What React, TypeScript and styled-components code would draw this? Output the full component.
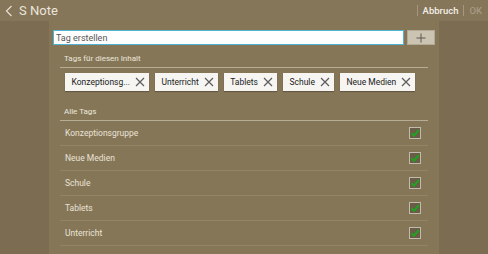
import React from 'react';
import styled, { createGlobalStyle } from 'styled-components';

const GlobalStyle = createGlobalStyle`
  html, body {
    margin: 0;
    padding: 0;
    background: #7c6c52;
  }
  body {
    font-family: 'Roboto', 'Noto Sans', sans-serif;
  }
`;

const selectedTags = ['Konzeptionsgruppe', 'Unterricht', 'Tablets', 'Schule', 'Neue Medien'];
const allTags = ['Konzeptionsgruppe', 'Neue Medien', 'Schule', 'Tablets', 'Unterricht'];

const shorten = (text: string, max = 12) =>
  text.length > max ? text.slice(0, max) + '...' : text;

const CrossIcon = () => (
  <svg width="10" height="10" viewBox="0 0 10 10">
    <path d="M1 1 L9 9 M9 1 L1 9" stroke="#5c5c5c" strokeWidth="1.2" fill="none" />
  </svg>
);

const CheckIcon = () => (
  <svg width="10" height="10" viewBox="0 0 10 10">
    <path d="M1.5 5.2 L4 7.8 L8.8 2" stroke="#1fa31f" strokeWidth="2" fill="none" />
  </svg>
);

export default function App() {
  return (
    <>
      <GlobalStyle />
      <Screen>
        <TopBar>
          <Title>
            <svg width="8" height="12" viewBox="0 0 8 12">
              <path d="M6.5 1 L1.5 6 L6.5 11" stroke="#e6e1d6" strokeWidth="1.2" fill="none" />
            </svg>
            <span>S Note</span>
          </Title>
          <Actions>
            <Divider />
            <ActionButton>Abbruch</ActionButton>
            <Divider />
            <ActionButton disabled>OK</ActionButton>
          </Actions>
        </TopBar>
        <Body>
          <Panel>
            <InputRow>
              <TagInput placeholder="Tag erstellen" autoFocus />
              <AddButton>
                <svg width="10" height="10" viewBox="0 0 10 10">
                  <path d="M5 0.5 V9.5 M0.5 5 H9.5" stroke="#5a5650" strokeWidth="1" fill="none" />
                </svg>
              </AddButton>
            </InputRow>

            <SectionHeader>Tags für diesen Inhalt</SectionHeader>
            <ChipList>
              {selectedTags.map(tag => (
                <Chip key={tag}>
                  <span>{shorten(tag)}</span>
                  <CrossIcon />
                </Chip>
              ))}
            </ChipList>

            <SectionHeader top={16}>Alle Tags</SectionHeader>
            <TagList>
              {allTags.map(tag => (
                <TagRow key={tag}>
                  <span>{tag}</span>
                  <CheckBox>
                    <CheckIcon />
                  </CheckBox>
                </TagRow>
              ))}
            </TagList>
          </Panel>
        </Body>
      </Screen>
    </>
  );
}

const Screen = styled.div`
  width: 488px;
  height: 254px;
  display: flex;
  flex-direction: column;
  overflow: hidden;
  background: #7c6c52;
`;

const TopBar = styled.div`
  height: 21px;
  flex-shrink: 0;
  display: flex;
  align-items: center;
  justify-content: space-between;
  background: #857559;
  padding: 0 6px 0 5px;
`;

const Title = styled.div`
  display: flex;
  align-items: center;
  gap: 6px;
  color: #ebe6dc;
  font-size: 13px;
`;

const Actions = styled.div`
  display: flex;
  align-items: center;
  gap: 5px;
`;

const Divider = styled.div`
  width: 1px;
  height: 11px;
  background: #a3977f;
`;

const ActionButton = styled.button`
  border: none;
  background: none;
  padding: 0;
  font-family: 'Roboto', sans-serif;
  font-size: 9.5px;
  font-weight: 500;
  color: ${props => (props.disabled ? '#a69a84' : '#f3efe7')};
`;

const Body = styled.div`
  flex: 1;
  display: flex;
  justify-content: center;
`;

const Panel = styled.div`
  width: 390px;
  background: #867658;
  padding-top: 9px;
`;

const InputRow = styled.div`
  display: flex;
  align-items: stretch;
  gap: 3px;
  padding: 0 4px;
  height: 15px;
`;

const TagInput = styled.input`
  width: 351px;
  box-sizing: border-box;
  margin: 0;
  border: 1px solid #4fb3d6;
  background: #ffffff;
  padding: 0 2px;
  font-family: 'Roboto', sans-serif;
  font-size: 9px;
  color: #333;
  outline: none;
  &::placeholder {
    color: #555;
  }
`;

const AddButton = styled.div`
  width: 28px;
  box-sizing: border-box;
  display: flex;
  align-items: center;
  justify-content: center;
  background: #cbc4b3;
  border: 1px solid #b3aa97;
`;

const SectionHeader = styled.div<{ top?: number }>`
  margin: ${props => props.top ?? 9}px 11px 0;
  padding: 0 4px 3px;
  border-bottom: 1px solid #b7ac96;
  font-size: 8px;
  line-height: 10px;
  color: #ece7dc;
`;

const ChipList = styled.div`
  display: flex;
  gap: 6px;
  padding: 5px 0 0 16px;
`;

const Chip = styled.div`
  height: 18px;
  box-sizing: border-box;
  display: flex;
  align-items: center;
  gap: 5px;
  padding: 0 4px 0 6.5px;
  background: #f6f5f2;
  box-shadow: 0 1px 1px rgba(0, 0, 0, 0.25);
  font-size: 8.5px;
  white-space: nowrap;
  color: #222;
`;

const TagList = styled.div`
  margin: 0 11px;
`;

const TagRow = styled.div`
  height: 25px;
  box-sizing: border-box;
  display: flex;
  align-items: center;
  justify-content: space-between;
  padding: 0 7px 0 5px;
  border-bottom: 1px solid #938468;
  font-size: 8.5px;
  color: #e9e3d7;
`;

const CheckBox = styled.div`
  width: 12px;
  height: 12px;
  box-sizing: border-box;
  display: flex;
  align-items: center;
  justify-content: center;
  border: 1px solid #c2bbab;
  background: #6a5c47;
`;
